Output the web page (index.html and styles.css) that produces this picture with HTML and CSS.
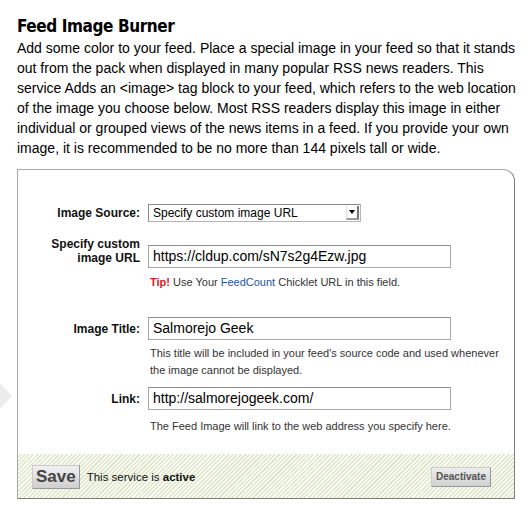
FILE: index.html
```html
<!DOCTYPE html>
<html>
<head>
<meta charset="utf-8">
<link rel="stylesheet" href="styles.css">
</head>
<body>
<div class="page">
  <h1 class="title">Feed Image Burner</h1>
  <p class="intro">Add some color to your feed. Place a special image in your feed so that it stands out from the pack when displayed in many popular RSS news readers. This service Adds an &lt;image&gt; tag block to your feed, which refers to the web location of the image you choose below. Most RSS readers display this image in either individual or grouped views of the news items in a feed. If you provide your own image, it is recommended to be no more than 144 pixels tall or wide.</p>
  <div class="box">
    <div class="form">
      <div class="row row-source">
        <label class="lbl">Image Source:</label>
        <div class="field">
          <div class="select"><span class="select-text">Specify custom image URL</span><span class="select-btn"><span class="tri"></span></span></div>
        </div>
      </div>
      <div class="row row-url">
        <label class="lbl lbl-two">Specify custom<br>image URL</label>
        <div class="field field-url">
          <div class="input">https://cldup.com/sN7s2g4Ezw.jpg</div>
          <div class="help tip"><span class="tip-red">Tip!</span> Use Your <span class="blue">FeedCount</span> Chicklet URL in this field.</div>
        </div>
      </div>
      <div class="row row-title">
        <label class="lbl">Image Title:</label>
        <div class="field">
          <div class="input">Salmorejo Geek</div>
        </div>
      </div>
      <div class="row row-help">
        <span></span>
        <div class="help">This title will be included in your feed's source code and used whenever the image cannot be displayed.</div>
      </div>
      <div class="row row-link">
        <label class="lbl">Link:</label>
        <div class="field">
          <div class="input">http://salmorejogeek.com/</div>
        </div>
      </div>
      <div class="row row-help2">
        <span></span>
        <div class="help">The Feed Image will link to the web address you specify here.</div>
      </div>
    </div>
    <div class="footer">
      <button class="save">Save</button>
      <span class="status">This service is <b>active</b></span>
      <button class="deactivate">Deactivate</button>
    </div>
  </div>
  <div class="arrow"></div>
</div>
</body>
</html>
```
FILE: styles.css
```css
html, body {
  margin: 0;
  padding: 0;
  background: #fff;
}
.page {
  position: relative;
  padding: 15px 0 0 17px;
  width: 498px;
  font-family: "Liberation Sans", Arial, sans-serif;
  color: #000;
}
.title {
  margin: 0;
  font-family: "DejaVu Sans Condensed", "DejaVu Sans", sans-serif;
  font-size: 17px;
  font-weight: bold;
  line-height: 22px;
  letter-spacing: -0.4px;
  color: #000;
}
.intro {
  margin: 1px 0 0 0;
  font-size: 14px;
  line-height: 20px;
  width: 500px;
}
.box {
  margin-top: 11px;
  border: 1px solid #a9a9a9;
  border-right-color: #7e7e7e;
  border-bottom-color: #7e7e7e;
  border-top-right-radius: 12px;
  width: 496px;
  background: #fff;
}
.form {
  padding-top: 34px;
}
.row {
  display: grid;
  grid-template-columns: 122px 1fr;
  column-gap: 8px;
  align-items: center;
}
.lbl {
  text-align: right;
  font-size: 12px;
  font-weight: bold;
  line-height: 14px;
  color: #111;
}
.row-url {
  margin-top: 15px;
  align-items: start;
}
.lbl-two {
  line-height: 14px;
}
.field-url .input {
  margin-top: 8px;
}
.select {
  display: flex;
  width: 211px;
  height: 16px;
  border: 1px solid #8a8a8a;
  border-bottom-color: #b5b5b5;
  border-right-color: #b5b5b5;
  background: #fff;
  font-size: 12px;
  line-height: 16px;
}
.select-text {
  flex: 1;
  padding-left: 4px;
  color: #000;
}
.select-btn {
  width: 10px;
  height: 12px;
  margin: 1px 1px 0 0;
  border-right: 2px solid #777;
  border-bottom: 2px solid #999;
  border-left: 1px solid #ddd;
  display: flex;
  align-items: center;
  justify-content: center;
}
.tri {
  width: 0;
  height: 0;
  border-left: 3px solid transparent;
  border-right: 3px solid transparent;
  border-top: 4px solid #000;
}
.input {
  width: 297px;
  height: 21px;
  border: 1px solid #a8a8a8;
  border-top-color: #8d8d8d;
  padding-left: 4px;
  font-size: 14px;
  line-height: 21px;
  color: #000;
  background: #fff;
  white-space: nowrap;
}
.help {
  font-size: 11px;
  line-height: 17px;
  color: #333;
  padding-left: 2px;
}
.tip {
  margin-top: 6px;
}
.tip-red {
  color: #d61a2b;
  font-weight: bold;
}
.blue {
  color: #22569c;
}
.row-title {
  margin-top: 26px;
}
.row-help {
  margin-top: 5px;
}
.row-help .help {
  width: 350px;
}
.row-link {
  margin-top: 8px;
}
.row-help2 {
  margin-top: 8px;
}
.footer {
  margin-top: 19px;
  height: 44px;
  display: flex;
  align-items: center;
  padding: 0 23px 0 14px;
  background: repeating-linear-gradient(135deg, #fbfcf7 0px, #fbfcf7 1.5px, #dfe8cb 1.5px, #dfe8cb 3px);
}
.save {
  height: 24px;
  padding: 0 3px;
  margin-top: 2px;
  border: 1px solid #c9c9c9;
  border-right-color: #999;
  border-bottom-color: #999;
  background: linear-gradient(#f0f0f0, #cfcfcf);
  font-family: "Liberation Sans", Arial, sans-serif;
  font-size: 17px;
  font-weight: bold;
  color: #444;
  line-height: 20px;
}
.status {
  margin-left: 7px;
  margin-top: 2px;
  font-size: 11.5px;
  color: #111;
}
.deactivate {
  margin-left: auto;
  height: 20px;
  padding: 0 4px;
  margin-top: 1px;
  border: 1px solid #ccc;
  border-right-color: #999;
  border-bottom-color: #999;
  background: linear-gradient(#eee, #d0d0d0);
  font-family: "Liberation Sans", Arial, sans-serif;
  font-size: 10px;
  font-weight: bold;
  color: #555;
}
.arrow {
  position: absolute;
  left: 0;
  top: 383px;
  width: 0;
  height: 0;
  border-top: 13px solid transparent;
  border-bottom: 13px solid transparent;
  border-left: 12px solid #ececec;
}
```
